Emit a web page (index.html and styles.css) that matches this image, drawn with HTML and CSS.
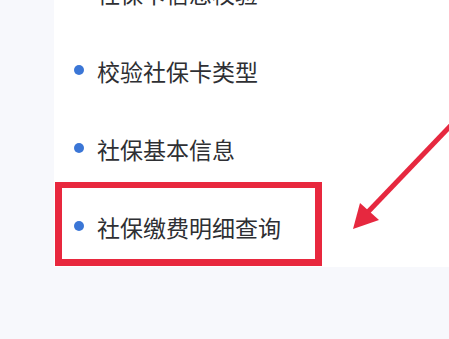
FILE: index.html
```html
<!DOCTYPE html>
<html lang="zh-CN">
<head>
<meta charset="utf-8">
<title>社保查询</title>
<link rel="stylesheet" href="styles.css">
</head>
<body>
<div class="page">
  <ul class="menu">
    <li class="item"><span class="dot"></span><span class="label">社保卡信息校验</span></li>
    <li class="item"><span class="dot"></span><span class="label">校验社保卡类型</span></li>
    <li class="item"><span class="dot"></span><span class="label">社保基本信息</span></li>
    <li class="item"><span class="dot"></span><span class="label">社保缴费明细查询</span></li>
  </ul>
  <div class="highlight"></div>
  <svg class="arrow" width="449" height="339" viewBox="0 0 449 339">
    <line x1="455" y1="121" x2="366" y2="214" stroke="#e6283f" stroke-width="5" stroke-linecap="butt"/>
    <polygon points="353,229 360,203 379,220" fill="#e6283f"/>
  </svg>
</div>
</body>
</html>
```
FILE: styles.css
```css
html, body {
  margin: 0;
  padding: 0;
  background: #f7f8fc;
  width: 449px;
  height: 339px;
  overflow: hidden;
}
.page {
  position: relative;
  display: flow-root;
  width: 449px;
  height: 339px;
  overflow: hidden;
  font-family: "Noto Sans CJK SC", "Noto Sans", sans-serif;
}
.menu {
  list-style: none;
  margin: -47px 0 0 54px;
  padding: 0 0 2px 0;
  background: #ffffff;
  display: flex;
  flex-direction: column;
}
.item {
  height: 78px;
  display: flex;
  align-items: center;
  padding-left: 20px;
}
.dot {
  width: 10px;
  height: 10px;
  border-radius: 50%;
  background: #3b76d6;
  margin-right: 13px;
  flex: none;
}
.label {
  font-size: 23px;
  color: #2e2f33;
  line-height: 1;
  position: relative;
  top: 1px;
}
.highlight {
  position: absolute;
  left: 55px;
  top: 182px;
  width: 253px;
  height: 71px;
  border: 7px solid #e8283e;
  border-top-width: 6px;
}
.arrow {
  position: absolute;
  left: 0;
  top: 0;
  pointer-events: none;
}
```
